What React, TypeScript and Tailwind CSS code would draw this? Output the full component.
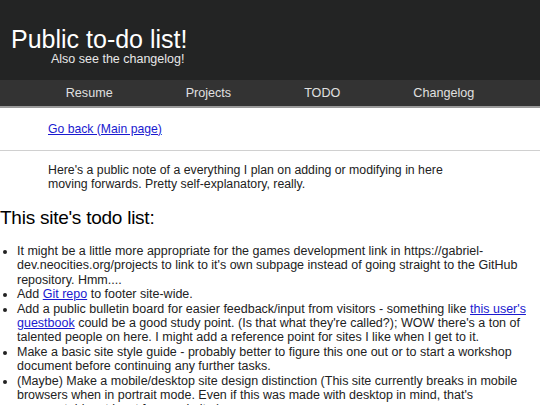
import React from 'react';

const navItems = ['Resume', 'Projects', 'TODO', 'Changelog'];

export default function App() {
  return (
    <div className="min-h-screen bg-white text-[#222] font-['Liberation_Sans',Arial,sans-serif]">
      {/* Header */}
      <header className="bg-[#232424] h-[80px] pt-[26px] pl-[11px]">
        <h1 className="text-[25px] leading-[26px] text-white">Public to-do list!</h1>
        <p className="text-[12.5px] leading-[15px] text-[#e8e8e8] pl-[40px]">Also see the changelog!</p>
      </header>

      {/* Nav */}
      <nav className="bg-[#333333] h-[28px] border-b-[2px] border-[#9a9a9a] flex justify-center items-center gap-[73px]">
        {navItems.map((item) => (
          <a key={item} href="#" className="text-[12.6px] text-[#e0e0e0]">
            {item}
          </a>
        ))}
      </nav>

      {/* Back link */}
      <div className="pl-[48px] pt-[12.5px] pb-[14.5px] leading-[14px]">
        <a href="#" className="text-[12.2px] leading-[14px] text-[#1a1ad0] underline">
          Go back (Main page)
        </a>
      </div>
      <hr className="border-t border-[#d0d0d0]" />

      {/* Intro */}
      <p className="pl-[48px] pr-[70px] pt-[12px] text-[12.3px] leading-[14px] text-[#222]">
        Here's a public note of a everything I plan on adding or modifying in here moving forwards. Pretty self-explanatory, really.
      </p>

      <h2 className="text-[19px] leading-[22px] tracking-[-0.25px] text-black mt-[16px]">This site's todo list:</h2>

      <ul className="list-disc pl-[17px] pr-[12px] mt-[15px] text-[12.5px] leading-[14.4px] text-[#222]">
        <li>
          It might be a little more appropriate for the games development link in https://gabriel-<wbr />dev.neocities.org/projects to link to it's own subpage instead of going straight to the GitHub repository. Hmm....
        </li>
        <li>
          Add <a href="#" className="text-[#1a1ad0] underline">Git repo</a> to footer site-wide.
        </li>
        <li>
          Add a public bulletin board for easier feedback/input from visitors - something like{' '}
          <a href="#" className="text-[#1a1ad0] underline">this user's guestbook</a> could be a good study point. (Is that what they're called?); WOW there's a ton of talented people on here. I might add a reference point for sites I like when I get to it.
        </li>
        <li>
          Make a basic site style guide - probably better to figure this one out or to start a workshop document before continuing any further tasks.
        </li>
        <li>
          (Maybe) Make a mobile/desktop site design distinction (This site currently breaks in mobile browsers when in portrait mode. Even if this was made with desktop in mind, that's unacceptable, at least for a website.)
        </li>
      </ul>
    </div>
  );
}
